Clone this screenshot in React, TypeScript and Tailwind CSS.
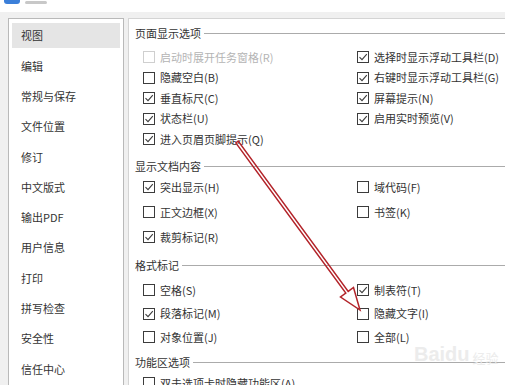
import React from 'react';

const FONT = "font-['Noto_Sans_CJK_SC','Noto_Sans',sans-serif]";

type Opt = { label: string; checked?: boolean; disabled?: boolean };

const Box: React.FC<{ checked?: boolean; disabled?: boolean }> = ({ checked, disabled }) => (
  <div
    className={`w-[12px] h-[12px] shrink-0 border bg-white flex items-center justify-center ${
      disabled ? 'border-[#cfcfcf]' : 'border-[#3c3c3c]'
    }`}
  >
    {checked && (
      <svg width="10" height="10" viewBox="0 0 10 10">
        <path d="M1.5 5.2 L4 7.6 L8.8 2.2" fill="none" stroke="#3c3c3c" strokeWidth="1.1" />
      </svg>
    )}
  </div>
);

const Row: React.FC<{ opt: Opt; h: string }> = ({ opt, h }) => (
  <div className={`flex items-center gap-[5px] ${h}`}>
    <Box checked={opt.checked} disabled={opt.disabled} />
    <span className={`text-[11px] leading-none whitespace-nowrap ${opt.disabled ? 'text-[#b4b4b4]' : 'text-[#333]'}`}>
      {opt.label}
    </span>
  </div>
);

const Header: React.FC<{ title: string; className?: string }> = ({ title, className }) => (
  <div className={`flex items-center h-[16px] ${className ?? ''}`}>
    <span className="text-[11px] leading-none text-[#333] whitespace-nowrap">{title}</span>
    <div className="flex-1 h-px bg-[#ababab] ml-[3px]" />
  </div>
);

const Section: React.FC<{ left: Opt[]; right: Opt[]; h: string; className?: string }> = ({ left, right, h, className }) => (
  <div className={`flex pl-[8px] ${className ?? ''}`}>
    <div className="w-[214px] flex flex-col">
      {left.map((o) => (
        <Row key={o.label} opt={o} h={h} />
      ))}
    </div>
    <div className="flex flex-col">
      {right.map((o) => (
        <Row key={o.label} opt={o} h={h} />
      ))}
    </div>
  </div>
);

const nav = ['视图', '编辑', '常规与保存', '文件位置', '修订', '中文版式', '输出PDF', '用户信息', '打印', '拼写检查', '安全性', '信任中心'];

export default function App() {
  return (
    <div className={`relative w-[513px] h-[385px] overflow-hidden bg-white ${FONT}`}>
      {/* title bar */}
      <div className="h-[12px] flex items-start gap-[5px] pl-[4px]">
        <div className="w-[16px] h-[4px] rounded-b-[3px] bg-[#3b7fd9]" />
        <div className="w-[22px] h-[3px] mt-[1px] bg-[#c8c8c8] rounded-sm" />
      </div>

      {/* body */}
      <div className="w-[505px] h-[373px] bg-[#f0f0f0] flex pt-[6px] pl-[8px]">
        {/* sidebar */}
        <div className="w-[116px] bg-white border border-[#b9b9b9] border-b-0 pt-[1.5px] px-[3px]">
          {nav.map((n, i) => (
            <div key={n} className="h-[30.3px] py-[2.5px]">
              <div className={`h-full flex items-center pl-[9px] text-[11px] text-[#333] ${i === 0 ? 'bg-[#e5e5e5]' : ''}`}>
                {n}
              </div>
            </div>
          ))}
        </div>

        {/* content */}
        <div className="flex-1 ml-[4px] bg-white border-l border-t border-[#d4d4d4] pt-[6px] pl-[6px]">
          <Header title="页面显示选项" />
          <Section
            className="mt-[5.75px]"
            h="h-[20.5px]"
            left={[
              { label: '启动时展开任务窗格(R)', disabled: true },
              { label: '隐藏空白(B)' },
              { label: '垂直标尺(C)', checked: true },
              { label: '状态栏(U)', checked: true },
              { label: '进入页眉页脚提示(Q)', checked: true },
            ]}
            right={[
              { label: '选择时显示浮动工具栏(D)', checked: true },
              { label: '右键时显示浮动工具栏(G)', checked: true },
              { label: '屏幕提示(N)', checked: true },
              { label: '启用实时预览(V)', checked: true },
            ]}
          />
          <Header title="显示文档内容" className="mt-[8.75px]" />
          <Section
            className="mt-[0.5px]"
            h="h-[25px]"
            left={[
              { label: '突出显示(H)', checked: true },
              { label: '正文边框(X)' },
              { label: '裁剪标记(R)', checked: true },
            ]}
            right={[{ label: '域代码(F)' }, { label: '书签(K)' }]}
          />
          <Header title="格式标记" className="mt-[7.5px]" />
          <Section
            className="mt-[5.25px]"
            h="h-[23.5px]"
            left={[{ label: '空格(S)' }, { label: '段落标记(M)', checked: true }, { label: '对象位置(J)' }]}
            right={[{ label: '制表符(T)', checked: true }, { label: '隐藏文字(I)' }, { label: '全部(L)' }]}
          />
          <Header title="功能区选项" className="mt-[5.25px]" />
          <Section
            className="mt-[3px]"
            h="h-[20px]"
            left={[{ label: '双击选项卡时隐藏功能区(A)' }]}
            right={[]}
          />
        </div>
      </div>

      {/* watermark */}
      <div className="absolute left-[414px] top-[344px] flex items-end gap-[3px] text-[#ececec] pointer-events-none">
        <span className="text-[20px] leading-none font-['Liberation_Sans',sans-serif] font-bold">Baidu</span>
        <span className="text-[13px] leading-none">经验</span>
      </div>

      {/* red arrow annotation */}
      <svg className="absolute left-0 top-0 pointer-events-none" width="513" height="385">
        <polygon
          points="235.8,142.9 345.8,293.1 340.5,297 360,310 353.5,287.5 348.2,291.4 238.2,141.1"
          fill="none"
          stroke="#b3242a"
          strokeWidth="1.5"
          strokeLinejoin="miter"
        />
      </svg>
    </div>
  );
}
